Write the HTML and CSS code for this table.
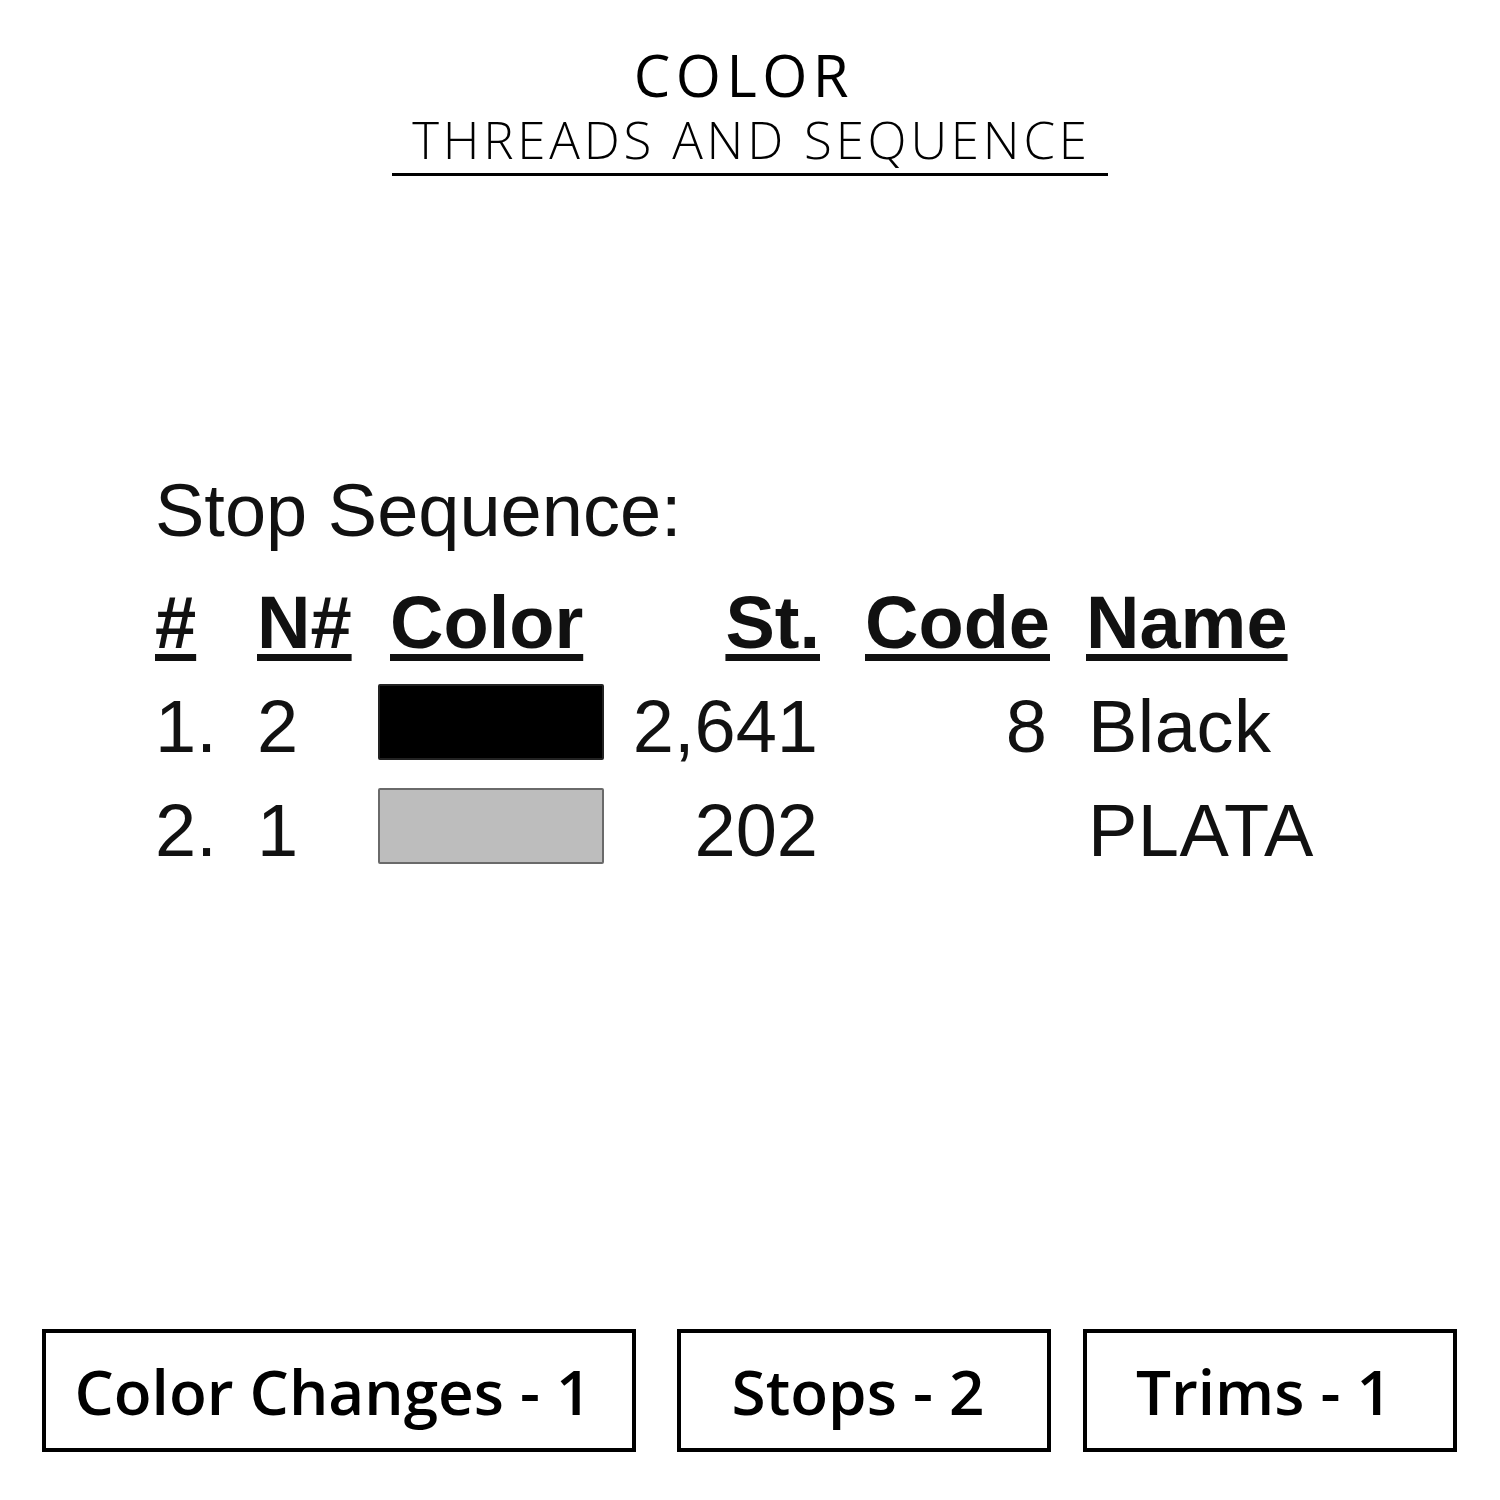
FILE: index.html
```html
<!DOCTYPE html>
<html>
<head>
<meta charset="utf-8">
<link rel="stylesheet" href="styles.css">
</head>
<body>
<div class="page">
  <header class="head">
    <div class="title">COLOR</div>
    <div class="subtitle">THREADS AND SEQUENCE</div>
  </header>

  <section class="seq">
    <div class="seq-title">Stop Sequence:</div>
    <div class="grid">
      <div class="th c-num"><span class="u">#</span></div>
      <div class="th c-n"><span class="u">N#</span></div>
      <div class="th c-color"><span class="u">Color</span></div>
      <div class="th c-st"><span class="u">St.</span></div>
      <div class="th c-code"><span class="u">Code</span></div>
      <div class="th c-name"><span class="u">Name</span></div>

      <div class="td c-num">1.</div>
      <div class="td c-n">2</div>
      <div class="td c-color"><span class="swatch swatch-black"></span></div>
      <div class="td c-st">2,641</div>
      <div class="td c-code">8</div>
      <div class="td c-name">Black</div>

      <div class="td c-num">2.</div>
      <div class="td c-n">1</div>
      <div class="td c-color"><span class="swatch swatch-silver"></span></div>
      <div class="td c-st">202</div>
      <div class="td c-code"></div>
      <div class="td c-name">PLATA</div>
    </div>
  </section>

  <footer class="stats">
    <div class="stat stat-wide">Color Changes - 1</div>
    <div class="stat">Stops - 2</div>
    <div class="stat">Trims - 1</div>
  </footer>
</div>
</body>
</html>
```

FILE: styles.css
```css
html, body {
  margin: 0;
  padding: 0;
  background: #fff;
  color: #000;
}

.page {
  width: 1500px;
  height: 1500px;
  box-sizing: border-box;
  display: flex;
  flex-direction: column;
  align-items: center;
  font-family: "Open Sans", "Liberation Sans", sans-serif;
}

.head {
  display: flex;
  flex-direction: column;
  align-items: center;
  padding-top: 42px;
}

.title {
  font-size: 58px;
  font-weight: 500;
  line-height: 66px;
  letter-spacing: 5.5px;
  margin-left: -12px;
}

.subtitle {
  font-size: 51px;
  font-weight: 300;
  line-height: 63px;
  letter-spacing: 3.8px;
  padding: 0 17px 2px 20px;
  border-bottom: 3px solid #000;
}

.seq {
  align-self: stretch;
  padding-left: 155px;
  padding-top: 290px;
  font-family: "Liberation Sans", Arial, sans-serif;
  color: #111;
}

.seq-title {
  font-size: 74px;
  line-height: 90px;
}

.grid {
  display: grid;
  grid-template-columns: 102px 121px 226px 216px 230px auto;
  grid-template-rows: 104px 104px 104px;
  column-gap: 0;
  font-size: 74px;
  margin-top: 15px;
}

.th {
  font-weight: 700;
  line-height: 104px;
}

.td {
  line-height: 104px;
  display: flex;
  align-items: center;
}

.u {
  text-decoration: underline;
  text-decoration-thickness: 7px;
  text-underline-offset: 6px;
}

.th.c-color { padding-left: 12px; }

.c-st, .c-code { text-align: right; justify-content: flex-end; }
.td.c-st { padding-right: 2px; }
.td.c-code { padding-right: 3px; }

.c-name { padding-left: 36px; }
.td.c-name { padding-left: 38px; letter-spacing: 0.5px; }

.swatch {
  display: block;
  width: 226px;
  height: 76px;
  box-sizing: border-box;
  margin-top: -10px;
  border-radius: 2px;
}

.swatch-black {
  background: #000;
  border: 2px solid #222;
}

.swatch-silver {
  background: #bdbdbd;
  border: 2px solid #6a6a6a;
}

.stats {
  margin-top: auto;
  margin-bottom: 48px;
  align-self: stretch;
  display: flex;
  padding-left: 42px;
}

.stat {
  width: 374px;
  height: 123px;
  box-sizing: border-box;
  border: 4px solid #000;
  padding-right: 12px;
  display: flex;
  align-items: center;
  justify-content: center;
  font-size: 62px;
  font-weight: 600;
}

.stat-wide {
  width: 594px;
  margin-right: 41px;
}

.stat:last-child {
  margin-left: 32px;
}
```
